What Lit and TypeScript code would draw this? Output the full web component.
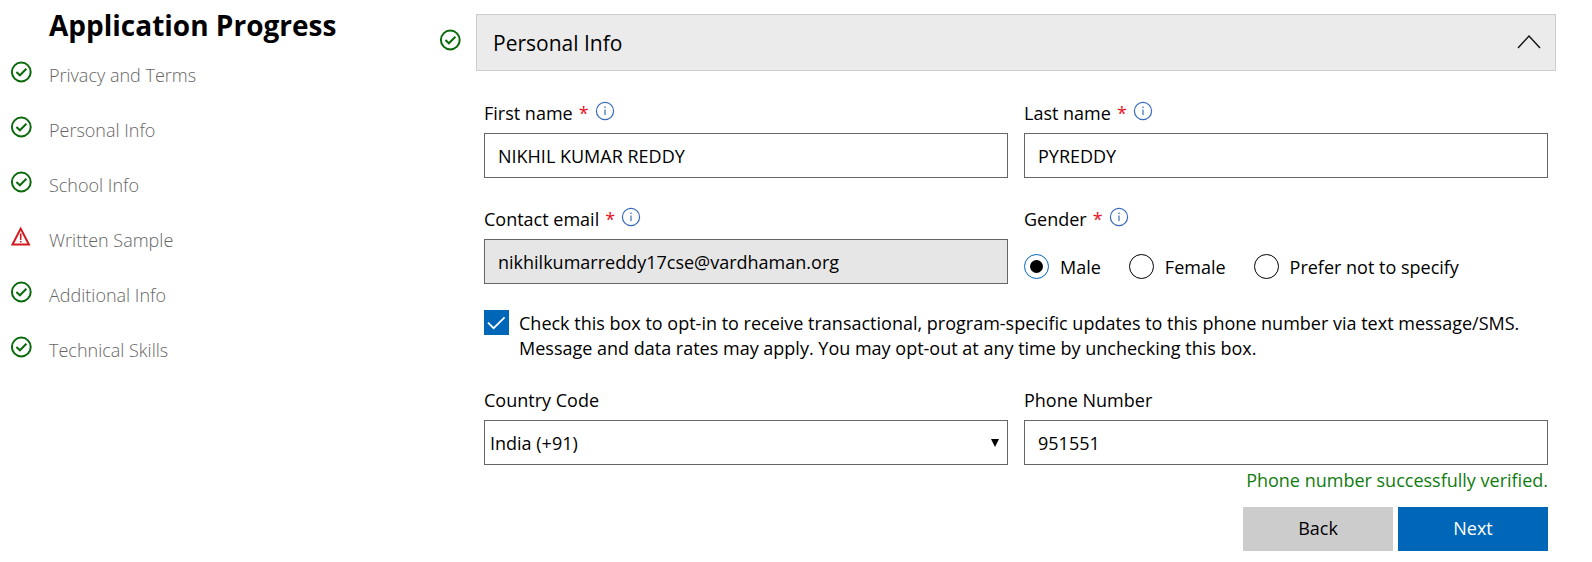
import { LitElement, html, css, svg, nothing } from "lit";
import { customElement, property, state } from "lit/decorators.js";

type Status = "done" | "warning";

@customElement("status-icon")
class StatusIcon extends LitElement {
  @property() status: Status = "done";

  static styles = css`
    :host { display: block; width: 22px; height: 22px; }
    .icon { display: block; width: 22px; height: 22px; }
    .done { fill: none; stroke: #0b6a0b; stroke-width: 2; }
    .warning { fill: none; stroke: #d11a1f; stroke-width: 2; }
    .mark { fill: #d11a1f; stroke: none; }
  `;

  render() {
    return this.status === "done"
      ? html`<svg class="icon" viewBox="0 0 22 22" role="img" aria-label="Complete">
          <circle class="done" cx="11.3" cy="11" r="9.4" />
          <path class="done" d="M6.4 11 L9.9 14.3 L16.4 7.8" />
        </svg>`
      : html`<svg class="icon" viewBox="0 0 22 22" role="img" aria-label="Needs attention">
          <path class="warning" d="M10.7 2.6 L18.9 18.6 L2.5 18.6 Z" />
          <path class="mark" d="M9.8 7.4 H11.6 L11.4 14 H10 Z M9.9 15 H11.5 V16.6 H9.9 Z" />
        </svg>`;
  }
}

@customElement("progress-nav")
class ProgressNav extends LitElement {
  private steps: { label: string; status: Status }[] = [
    { label: "Privacy and Terms", status: "done" },
    { label: "Personal Info", status: "done" },
    { label: "School Info", status: "done" },
    { label: "Written Sample", status: "warning" },
    { label: "Additional Info", status: "done" },
    { label: "Technical Skills", status: "done" },
  ];

  static styles = css`
    :host { display: block; padding: 6px 10px 0; }
    .title { margin: 0 0 14px 39px; font-size: 28px; line-height: 38px; font-weight: 700; }
    .steps { display: grid; gap: 25px; margin: 0; padding: 0; list-style: none; }
    .step { display: flex; gap: 17px; height: 30px; align-items: flex-start; }
    .icon { margin-top: 3px; }
    .link { color: #666; font-size: 18px; line-height: 34px; font-weight: 300; text-decoration: none; }
  `;

  render() {
    return html`
      <h2 class="title">Application Progress</h2>
      <ul class="steps">
        ${this.steps.map(
          (s) => html`<li class="step">
            <status-icon class="icon" .status=${s.status}></status-icon>
            <a class="link" href="#">${s.label}</a>
          </li>`
        )}
      </ul>
    `;
  }
}

@customElement("app-root")
class AppRoot extends LitElement {
  @state() private open = true;

  static styles = css`
    :host {
      display: block;
      min-height: 100vh;
      background: #fff;
      color: #000;
      font-family: "Open Sans", "Noto Sans", sans-serif;
      font-size: 18px;
      line-height: 25px;
    }
    * { box-sizing: border-box; }
    input, select, button { font: inherit; color: inherit; border-radius: 0; margin: 0; }
    .page { display: grid; grid-template-columns: 439px minmax(0, 1fr); }
    .section { display: grid; grid-template-columns: 22px minmax(0, 1fr); column-gap: 15px; padding: 14px 36px 0 0; }
    .section-status { margin-top: 15px; }
    .header {
      display: flex; align-items: center; justify-content: space-between;
      width: 100%; height: 57px; padding: 1px 14px 0 16px;
      border: 1px solid #ccc; background: #ebebeb;
      font-size: 21px; text-align: left;
    }
    .chevron { width: 24px; height: 16px; fill: none; stroke: #111; stroke-width: 1.4; }
    .form { display: grid; grid-template-columns: 1fr 1fr; column-gap: 16px; padding: 27px 8px 0; }
    .field { min-width: 0; margin: 0; padding: 0; border: 0; }
    .label-row { display: flex; gap: 6px; height: 35px; padding-top: 3px; }
    .required { color: #e81123; }
    .info { width: 20px; height: 20px; padding: 0; border: 0; background: none; }
    .info-icon { display: block; width: 20px; height: 20px; fill: none; stroke: #3a6ab8; stroke-width: 1.2; }
    .control {
      display: block; width: 100%; height: 45px; padding: 0 13px;
      border: 1px solid #666; background: #fff; outline: 0;
    }
    .control:disabled { background: #e6e6e6; color: #000; opacity: 1; }
    .second { margin-top: 26px; }
    .select-wrap { display: grid; align-items: center; }
    .select-wrap > * { grid-area: 1 / 1; }
    .select { appearance: none; padding: 1px 5px 0; }
    .arrow { justify-self: end; width: 8px; height: 8px; margin-right: 9px; pointer-events: none; }
    .radios { display: flex; flex-wrap: wrap; gap: 28px; padding-top: 15px; }
    .radio-label { display: flex; gap: 11px; line-height: 27px; }
    .radio {
      appearance: none; display: grid; place-items: center;
      width: 25px; height: 25px; border: 1px solid #000; border-radius: 50%; background: #fff;
    }
    .radio:checked { border-color: #0067b8; }
    .radio:checked::before { content: ""; width: 13px; height: 13px; border-radius: 50%; background: #000; }
    .opt-in { grid-column: 1 / -1; display: grid; grid-template-columns: 25px minmax(0, 1fr); column-gap: 10px; margin-top: 26px; }
    .tick-box { display: grid; height: 25px; }
    .tick-box > * { grid-area: 1 / 1; }
    .checkbox { appearance: none; width: 25px; height: 25px; border: 1px solid #000; background: #fff; }
    .checkbox:checked { border-color: #0067b8; background: #0067b8; }
    .tick { width: 25px; height: 25px; fill: none; stroke: #fff; stroke-width: 1.7; pointer-events: none; }
    .opt-in-text { padding-top: 1px; }
    .last { margin-top: 24px; }
    .footer { grid-column: 1 / -1; }
    .verified { margin: 3px 0 14px; color: #107c10; text-align: right; }
    .actions { display: flex; justify-content: flex-end; gap: 5px; }
    .button { width: 150px; height: 44px; padding: 0 0 2px; border: 0; background: #ccc; }
    .primary { background: #0067b8; color: #fff; }
  `;

  private labelRow(id: string, text: string, required = false) {
    return html`<div class="label-row">
      <label for=${id}>${text}</label>
      ${required ? html`<span class="required">*</span>${this.info(text)}` : nothing}
    </div>`;
  }

  private info(text: string) {
    return html`<button class="info" type="button" aria-label="About ${text}">
      <svg class="info-icon" viewBox="0 0 20 20">
        ${svg`<circle cx="10" cy="10" r="8.6" /><path d="M10 8.4 V14 M10 5.6 V7" />`}
      </svg>
    </button>`;
  }

  private radio(text: string, checked = false) {
    return html`<label class="radio-label">
      <input class="radio" type="radio" name="gender" value=${text} ?checked=${checked} />${text}
    </label>`;
  }

  render() {
    return html`
      <div class="page">
        <progress-nav></progress-nav>
        <main class="section">
          <status-icon class="section-status"></status-icon>
          <div>
            <button class="header" aria-expanded=${this.open} @click=${() => (this.open = !this.open)}>
              <span>Personal Info</span>
              <svg class="chevron" viewBox="0 0 24 16"><path d="M1 13 L12 1 L23 13" /></svg>
            </button>
            ${this.open ? this.form() : nothing}
          </div>
        </main>
      </div>
    `;
  }

  private form() {
    return html`<form class="form" @submit=${(e: Event) => e.preventDefault()}>
      <div class="field">
        ${this.labelRow("first", "First name", true)}
        <input class="control" id="first" type="text" value="NIKHIL KUMAR REDDY" />
      </div>
      <div class="field">
        ${this.labelRow("last", "Last name", true)}
        <input class="control" id="last" type="text" value="PYREDDY" />
      </div>
      <div class="field second">
        ${this.labelRow("email", "Contact email", true)}
        <input class="control" id="email" type="email" value="nikhilkumarreddy17cse@vardhaman.org" disabled />
      </div>
      <div class="field second" role="radiogroup" aria-labelledby="gender">
        <div class="label-row">
          <span id="gender">Gender</span><span class="required">*</span>${this.info("Gender")}
        </div>
        <div class="radios">
          ${this.radio("Male", true)} ${this.radio("Female")} ${this.radio("Prefer not to specify")}
        </div>
      </div>
      <div class="opt-in">
        <span class="tick-box">
          <input class="checkbox" id="opt-in" type="checkbox" checked />
          <svg class="tick" viewBox="0 0 25 25"><path d="M4 12.6 L9.6 18.2 L20.6 7.4" /></svg>
        </span>
        <label class="opt-in-text" for="opt-in">
          Check this box to opt-in to receive transactional, program-specific updates to this phone number via
          text message/SMS. Message and data rates may apply. You may opt-out at any time by unchecking this box.
        </label>
      </div>
      <div class="field last">
        ${this.labelRow("country", "Country Code")}
        <div class="select-wrap">
          <select class="control select" id="country"><option>India (+91)</option></select>
          <svg class="arrow" viewBox="0 0 8 8"><path d="M0 0 H8 L4 8 Z" /></svg>
        </div>
      </div>
      <div class="field last">
        ${this.labelRow("phone", "Phone Number")}
        <input class="control" id="phone" type="tel" value="951551" />
      </div>
      <div class="footer">
        <p class="verified" role="status">Phone number successfully verified.</p>
        <div class="actions">
          <button class="button" type="button">Back</button>
          <button class="button primary" type="submit">Next</button>
        </div>
      </div>
    </form>`;
  }
}
